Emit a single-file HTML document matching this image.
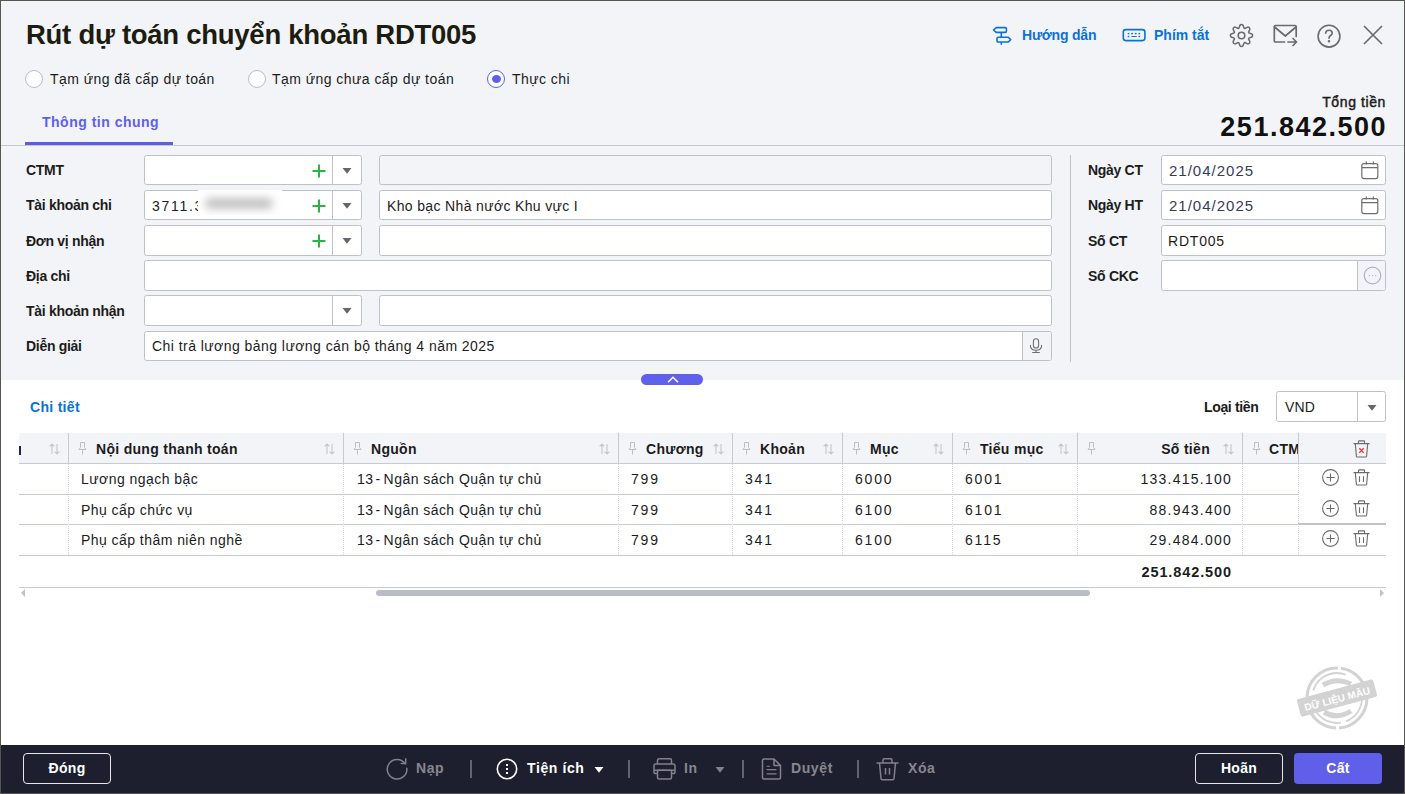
<!DOCTYPE html>
<html><head><meta charset="utf-8"><style>
*{box-sizing:border-box;margin:0;padding:0}
html,body{width:1405px;height:794px;overflow:hidden;background:#fff}
body{font-family:"Liberation Sans",sans-serif;color:#1c1c1c;position:relative}
.a{position:absolute;white-space:nowrap}
svg{position:absolute;overflow:visible}
#frame{position:absolute;left:0;top:0;width:1405px;height:794px;border:1px solid #58554f;z-index:50}
#top{position:absolute;left:0;top:0;width:1405px;height:380px;background:#f3f4f8}
#foot{position:absolute;left:0;top:745px;width:1405px;height:49px;background:#1e1f2e}
.title{left:26px;top:20px;font-size:27.5px;font-weight:700;letter-spacing:-0.27px;color:#1c1c10;line-height:30px}
.radio{width:18px;height:18px;border:1px solid #b9bcc6;border-radius:50%;background:#fff;top:70px}
.rlab{top:71px;font-size:14px;line-height:16px;letter-spacing:0.45px;color:#1c1c1c}
.hl{font-size:14px;font-weight:700;color:#0a72d6;top:27px;line-height:16px}
.lbl{font-size:14px;letter-spacing:-0.3px;font-weight:700;color:#1c1c1c;line-height:16px}
.fld{position:absolute;background:#fff;border:1px solid #bec0ca;border-radius:2.5px;height:30px}
.txt{font-size:14px;line-height:16px;letter-spacing:0.35px;color:#1c1c1c}
.hd{font-size:14px;font-weight:700;line-height:16px;letter-spacing:0.3px;color:#1c1c1c}
.cell{font-size:14px;line-height:16px;letter-spacing:0.45px;color:#1c1c1c}
.num{font-size:14px;line-height:16px;letter-spacing:1.8px;color:#1c1c1c}
.ft{font-size:14px;font-weight:700;line-height:16px;letter-spacing:0.6px;color:#86878f}
</style></head><body>
<div id="top"></div>
<div class="a title">Rút dự toán chuyển khoản RDT005</div>
<div class="a radio" style="left:25px"></div><div class="a rlab" style="left:50px">Tạm ứng đã cấp dự toán</div>
<div class="a radio" style="left:248px"></div><div class="a rlab" style="left:272px">Tạm ứng chưa cấp dự toán</div>
<div class="a radio" style="left:487px;border-color:#5d5fef"></div><div class="a" style="left:491.5px;top:75px;width:9px;height:8px;border-radius:50%;background:#5d5fef"></div><div class="a rlab" style="left:512px">Thực chi</div>
<div class="a" style="left:42px;top:114px;font-size:14px;font-weight:700;letter-spacing:0.5px;color:#5d5fef;line-height:16px">Thông tin chung</div>
<div class="a" style="left:0;top:145px;width:1405px;height:1px;background:#c5c7ce"></div>
<div class="a" style="left:25px;top:142px;width:148px;height:3px;background:#5b5ce8"></div>
<div class="a" style="right:19px;top:94px;font-size:14px;font-weight:400;-webkit-text-stroke:0.45px #1c1c1c;letter-spacing:0.6px;line-height:16px;color:#1c1c1c">Tổng tiền</div>
<div class="a" style="right:18px;top:112px;font-size:27px;font-weight:700;letter-spacing:1.5px;line-height:30px;color:#111">251.842.500</div>
<svg style="left:992px;top:26px" width="21" height="21" viewBox="0 0 21 21" fill="none" stroke="#0a72d6" stroke-width="1.6" stroke-linejoin="round">
<path d="M4.2 1.6H13.3Q14.4 1.6 14.4 2.7V5.3Q14.4 6.4 13.3 6.4H4.2L1.5 4Z"/><path d="M9.3 6.4V11.2M9.3 16V18.8"/>
<path d="M6.1 11.2H16.3L18.7 13.6L16.3 16H6.1Q5 16 5 14.9V12.3Q5 11.2 6.1 11.2Z"/></svg>
<div class="a hl" style="left:1022px;letter-spacing:-0.2px">Hướng dẫn</div>
<svg style="left:1122px;top:28px" width="24" height="14" viewBox="0 0 24 14" fill="none" stroke="#0a72d6" stroke-width="1.6">
<rect x="1.3" y="1.6" width="21.6" height="11" rx="2.5"/>
<g stroke="none" fill="#0a72d6"><rect x="5.7" y="4.9" width="1.6" height="1.4"/><rect x="9.2" y="4.9" width="1.8" height="1.4"/><rect x="12.8" y="4.9" width="1.8" height="1.4"/><rect x="16.5" y="4.9" width="1.6" height="1.4"/>
<rect x="5.7" y="7.8" width="1.6" height="1.4"/><rect x="9.3" y="7.9" width="5.5" height="1.2" rx="0.5"/><rect x="16.5" y="7.8" width="1.6" height="1.4"/></g></svg>
<div class="a hl" style="left:1154px">Phím tắt</div>
<svg style="left:1229.6px;top:23.7px" width="23" height="23" viewBox="0 0 23 23" fill="none" stroke="#6b6b6b" stroke-width="1.5" stroke-linejoin="round">
<path d="M8.90 4.15 L9.95 1.22 A1.9 1.9 0 0 1 13.05 1.22 L14.10 4.15 A7.8 7.8 0 0 1 14.86 4.46 L17.67 3.13 A1.9 1.9 0 0 1 19.87 5.33 L18.54 8.14 A7.8 7.8 0 0 1 18.85 8.90 L21.78 9.95 A1.9 1.9 0 0 1 21.78 13.05 L18.85 14.10 A7.8 7.8 0 0 1 18.54 14.86 L19.87 17.67 A1.9 1.9 0 0 1 17.67 19.87 L14.86 18.54 A7.8 7.8 0 0 1 14.10 18.85 L13.05 21.78 A1.9 1.9 0 0 1 9.95 21.78 L8.90 18.85 A7.8 7.8 0 0 1 8.14 18.54 L5.33 19.87 A1.9 1.9 0 0 1 3.13 17.67 L4.46 14.86 A7.8 7.8 0 0 1 4.15 14.10 L1.22 13.05 A1.9 1.9 0 0 1 1.22 9.95 L4.15 8.90 A7.8 7.8 0 0 1 4.46 8.14 L3.13 5.33 A1.9 1.9 0 0 1 5.33 3.13 L8.14 4.46 A7.8 7.8 0 0 1 8.90 4.15Z"/><circle cx="11.5" cy="11.5" r="3.3" stroke-width="1.6"/></svg>
<svg style="left:1273px;top:24px" width="26" height="24" viewBox="0 0 26 24" fill="none" stroke="#6b6b6b" stroke-width="1.7" stroke-linecap="round" stroke-linejoin="round">
<path d="M11.5 18H2.5Q1.3 18 1.3 16.8V2.7Q1.3 1.5 2.5 1.5H22Q23.2 1.5 23.2 2.7V12.5"/><path d="M1.6 3L12.3 12L23 3"/>
<path d="M15 18H23.5M20 14.5L23.5 18L20 21.5"/></svg>
<svg style="left:1317px;top:24px" width="24" height="24" viewBox="0 0 24 24" fill="none" stroke="#6b6b6b" stroke-width="1.6" stroke-linecap="round">
<circle cx="12" cy="12.2" r="10.9"/><path d="M8.6 9.3Q8.8 6.2 12 6.2Q15.2 6.2 15.2 9.1Q15.2 10.8 13.3 11.8Q12 12.5 12 14.2"/><circle cx="12" cy="17.2" r="0.5" fill="#6b6b6b"/></svg>
<svg style="left:1362px;top:24px" width="22" height="22" viewBox="0 0 22 22" fill="none" stroke="#6b6b6b" stroke-width="1.7">
<path d="M2 2L20 20M20 2L2 20"/></svg>
<div class="a lbl" style="left:26px;top:162px">CTMT</div>
<div class="a lbl" style="left:26px;top:197px">Tài khoản chi</div>
<div class="a lbl" style="left:26px;top:233px">Đơn vị nhận</div>
<div class="a lbl" style="left:26px;top:268px">Địa chỉ</div>
<div class="a lbl" style="left:26px;top:303px">Tài khoản nhận</div>
<div class="a lbl" style="left:26px;top:338px">Diễn giải</div>
<div class="fld" style="left:144px;top:155px;width:218px;height:30px"></div>
<div class="a" style="left:332px;top:155px;width:1px;height:30px;background:#bec0ca"></div>
<svg style="left:342px;top:168px" width="10" height="6" viewBox="0 0 10 6"><path d="M0.5 0H9.5L5 5.8Z" fill="#666"/></svg>
<svg style="left:312px;top:164px" width="14" height="14" viewBox="0 0 14 14" stroke="#2ab441" stroke-width="2"><path d="M7 0.5V13.5M0.5 7H13.5"/></svg>
<div class="fld" style="left:379px;top:155px;width:673px;height:30px;background:#f3f4f8"></div>
<div class="fld" style="left:144px;top:190px;width:218px;height:30px"></div>
<div class="a" style="left:332px;top:190px;width:1px;height:30px;background:#bec0ca"></div>
<svg style="left:342px;top:203px" width="10" height="6" viewBox="0 0 10 6"><path d="M0.5 0H9.5L5 5.8Z" fill="#666"/></svg>
<svg style="left:312px;top:199px" width="14" height="14" viewBox="0 0 14 14" stroke="#2ab441" stroke-width="2"><path d="M7 0.5V13.5M0.5 7H13.5"/></svg>
<div class="fld" style="left:379px;top:190px;width:673px;height:30px;background:#fff"></div>
<div class="fld" style="left:144px;top:225px;width:218px;height:31px"></div>
<div class="a" style="left:332px;top:225px;width:1px;height:31px;background:#bec0ca"></div>
<svg style="left:342px;top:238px" width="10" height="6" viewBox="0 0 10 6"><path d="M0.5 0H9.5L5 5.8Z" fill="#666"/></svg>
<svg style="left:312px;top:234px" width="14" height="14" viewBox="0 0 14 14" stroke="#2ab441" stroke-width="2"><path d="M7 0.5V13.5M0.5 7H13.5"/></svg>
<div class="fld" style="left:379px;top:225px;width:673px;height:31px;background:#fff"></div>
<div class="fld" style="left:144px;top:260px;width:908px;height:31px"></div>
<div class="fld" style="left:144px;top:295px;width:218px;height:31px"></div>
<div class="a" style="left:332px;top:295px;width:1px;height:31px;background:#bec0ca"></div>
<svg style="left:342px;top:308px" width="10" height="6" viewBox="0 0 10 6"><path d="M0.5 0H9.5L5 5.8Z" fill="#666"/></svg>
<div class="fld" style="left:379px;top:295px;width:673px;height:31px;background:#fff"></div>
<div class="fld" style="left:144px;top:331px;width:908px;height:30px"></div>
<div class="a" style="left:1022px;top:332px;width:29px;height:28px;background:#f3f4f8;border-left:1px solid #bec0ca;border-radius:0 2px 2px 0"></div>
<svg style="left:1029px;top:338px" width="14" height="16" viewBox="0 0 14 16" fill="none" stroke="#707070" stroke-width="1.1" stroke-linecap="round">
<rect x="4.4" y="0.8" width="5.2" height="9.2" rx="2.6"/><path d="M1.4 7.2Q1.4 12.2 7 12.2Q12.6 12.2 12.6 7.2M7 12.2V14.4M3.6 14.5H10.4"/></svg>
<div class="a txt" style="left:152px;top:198px;letter-spacing:1.7px">3711.3</div>
<div class="a" style="left:198px;top:190px;width:84px;height:25px;background:#fff;overflow:hidden"><div style="position:absolute;left:7px;top:8px;width:68px;height:11px;border-radius:5px;background:#c2c2c2;filter:blur(4px)"></div></div>
<div class="a txt" style="left:387px;top:198px">Kho bạc Nhà nước Khu vực I</div>
<div class="a txt" style="left:152px;top:338px;letter-spacing:0.45px">Chi trả lương bảng lương cán bộ tháng 4 năm 2025</div>
<div class="a" style="left:1070px;top:155px;width:1px;height:207px;background:#bec0ca"></div>
<div class="a lbl" style="left:1088px;top:162px">Ngày CT</div>
<div class="fld" style="left:1161px;top:155px;width:225px;height:30px"></div>
<div class="a lbl" style="left:1088px;top:197px">Ngày HT</div>
<div class="fld" style="left:1161px;top:190px;width:225px;height:30px"></div>
<div class="a lbl" style="left:1088px;top:233px">Số CT</div>
<div class="fld" style="left:1161px;top:225px;width:225px;height:31px"></div>
<div class="a lbl" style="left:1088px;top:268px">Số CKC</div>
<div class="fld" style="left:1161px;top:260px;width:225px;height:31px"></div>
<div class="a txt" style="left:1169px;top:163px;font-size:15px;letter-spacing:1.0px;color:#363d5a">21/04/2025</div>
<svg style="left:1360px;top:161px" width="19" height="19" viewBox="0 0 19 19" fill="none" stroke="#6e6e6e" stroke-width="1.2">
<rect x="1.8" y="2.6" width="16" height="15" rx="2"/><path d="M1.8 6.7H17.8M6.3 0.5V3.5M13.3 0.5V3.5"/></svg>
<div class="a txt" style="left:1169px;top:198px;font-size:15px;letter-spacing:1.0px;color:#363d5a">21/04/2025</div>
<svg style="left:1360px;top:196px" width="19" height="19" viewBox="0 0 19 19" fill="none" stroke="#6e6e6e" stroke-width="1.2">
<rect x="1.8" y="2.6" width="16" height="15" rx="2"/><path d="M1.8 6.7H17.8M6.3 0.5V3.5M13.3 0.5V3.5"/></svg>
<div class="a txt" style="left:1168px;top:233px;letter-spacing:0.8px">RDT005</div>
<div class="a" style="left:1357px;top:261px;width:28px;height:29px;background:#f3f4f8;border-left:1px solid #bec0ca;border-radius:0 2px 2px 0"></div>
<svg style="left:1362.5px;top:266px" width="19" height="19" viewBox="0 0 19 19" fill="none" stroke="#aeb2c8" stroke-width="1.2">
<circle cx="9.5" cy="9.5" r="8.3"/><g fill="#aeb2c8" stroke="none"><circle cx="6.3" cy="9.6" r="0.7"/><circle cx="9.5" cy="9.6" r="0.7"/><circle cx="12.7" cy="9.6" r="0.7"/></g></svg>
<div class="a" style="left:641px;top:374px;width:62px;height:11px;border-radius:6px;background:#5f60ec"></div>
<svg style="left:667px;top:376px" width="12" height="7" viewBox="0 0 12 7" fill="none" stroke="#fff" stroke-width="1.5"><path d="M1 6.3L6 1.2L11 6.3"/></svg>
<div class="a" style="left:30px;top:399px;font-size:14px;font-weight:700;line-height:16px;letter-spacing:0.3px;color:#0a72d6">Chi tiết</div>
<div class="a lbl" style="left:1204px;top:399px;letter-spacing:-0.35px">Loại tiền</div>
<div class="fld" style="left:1276px;top:391px;width:110px;height:31px"></div>
<div class="a" style="left:1357px;top:391px;width:1px;height:31px;background:#bec0ca"></div>
<svg style="left:1367px;top:405px" width="10" height="6" viewBox="0 0 10 6"><path d="M0.5 0H9.5L5 5.8Z" fill="#666"/></svg>
<div class="a txt" style="left:1285px;top:399px;letter-spacing:0.2px">VND</div>
<div class="a" style="left:19px;top:433px;width:1367px;height:30px;background:#f3f4f8"></div>
<div class="a" style="left:19px;top:463px;width:1279px;height:1px;background:#c8cad3"></div>
<div class="a" style="left:19px;top:494px;width:1279px;height:1px;background:#c8cad3"></div>
<div class="a" style="left:19px;top:524px;width:1279px;height:1px;background:#c8cad3"></div>
<div class="a" style="left:19px;top:555px;width:1279px;height:1px;background:#c8cad3"></div>
<div class="a" style="left:1298px;top:463px;width:88px;height:1px;background:#c8cad3"></div>
<div class="a" style="left:1298px;top:523px;width:88px;height:2px;background:#c0c3cc"></div>
<div class="a" style="left:1298px;top:555px;width:88px;height:1px;background:#c8cad3"></div>
<div class="a" style="left:19px;top:587px;width:1367px;height:1px;background:#c8cad3"></div>
<div class="a" style="left:68px;top:433px;width:1px;height:30px;background:#c8cad3"></div>
<div class="a" style="left:343px;top:433px;width:1px;height:30px;background:#c8cad3"></div>
<div class="a" style="left:618px;top:433px;width:1px;height:30px;background:#c8cad3"></div>
<div class="a" style="left:732px;top:433px;width:1px;height:30px;background:#c8cad3"></div>
<div class="a" style="left:842px;top:433px;width:1px;height:30px;background:#c8cad3"></div>
<div class="a" style="left:952px;top:433px;width:1px;height:30px;background:#c8cad3"></div>
<div class="a" style="left:1077px;top:433px;width:1px;height:30px;background:#c8cad3"></div>
<div class="a" style="left:1242px;top:433px;width:1px;height:30px;background:#c8cad3"></div>
<div class="a" style="left:1298px;top:433px;width:1px;height:30px;background:#c8cad3"></div>
<div class="a" style="left:68px;top:464px;width:1px;height:91px;background:repeating-linear-gradient(to bottom,#d3d5dc 0 1px,transparent 1px 2px)"></div>
<div class="a" style="left:343px;top:464px;width:1px;height:91px;background:repeating-linear-gradient(to bottom,#d3d5dc 0 1px,transparent 1px 2px)"></div>
<div class="a" style="left:618px;top:464px;width:1px;height:91px;background:repeating-linear-gradient(to bottom,#d3d5dc 0 1px,transparent 1px 2px)"></div>
<div class="a" style="left:732px;top:464px;width:1px;height:91px;background:repeating-linear-gradient(to bottom,#d3d5dc 0 1px,transparent 1px 2px)"></div>
<div class="a" style="left:842px;top:464px;width:1px;height:91px;background:repeating-linear-gradient(to bottom,#d3d5dc 0 1px,transparent 1px 2px)"></div>
<div class="a" style="left:952px;top:464px;width:1px;height:91px;background:repeating-linear-gradient(to bottom,#d3d5dc 0 1px,transparent 1px 2px)"></div>
<div class="a" style="left:1077px;top:464px;width:1px;height:91px;background:repeating-linear-gradient(to bottom,#d3d5dc 0 1px,transparent 1px 2px)"></div>
<div class="a" style="left:1242px;top:464px;width:1px;height:91px;background:repeating-linear-gradient(to bottom,#d3d5dc 0 1px,transparent 1px 2px)"></div>
<div class="a" style="left:1298px;top:464px;width:1px;height:91px;background:repeating-linear-gradient(to bottom,#d3d5dc 0 1px,transparent 1px 2px)"></div>
<svg style="left:49px;top:443px" width="11" height="12" viewBox="0 0 11 12" fill="none" stroke="#c3c6cd" stroke-width="1.1"><path d="M3 11V1M0.6 3.4L3 1L5.4 3.4M8 1V11M5.6 8.6L8 11L10.4 8.6"/></svg>
<div class="a" style="left:19px;top:446px;width:1.5px;height:9px;background:#1d2266"></div>
<svg style="left:78px;top:442px" width="9" height="13" viewBox="0 0 9 13" fill="none" stroke="#bdbfc4" stroke-width="1"><path d="M2.5 0.5H6.5V5.5L8 7.5H1L2.5 5.5Z"/><path d="M4.5 7.5V12.5"/></svg>
<div class="a hd" style="left:96px;top:441px">Nội dung thanh toán</div>
<svg style="left:324px;top:443px" width="11" height="12" viewBox="0 0 11 12" fill="none" stroke="#c3c6cd" stroke-width="1.1"><path d="M3 11V1M0.6 3.4L3 1L5.4 3.4M8 1V11M5.6 8.6L8 11L10.4 8.6"/></svg>
<svg style="left:353px;top:442px" width="9" height="13" viewBox="0 0 9 13" fill="none" stroke="#bdbfc4" stroke-width="1"><path d="M2.5 0.5H6.5V5.5L8 7.5H1L2.5 5.5Z"/><path d="M4.5 7.5V12.5"/></svg>
<div class="a hd" style="left:371px;top:441px">Nguồn</div>
<svg style="left:599px;top:443px" width="11" height="12" viewBox="0 0 11 12" fill="none" stroke="#c3c6cd" stroke-width="1.1"><path d="M3 11V1M0.6 3.4L3 1L5.4 3.4M8 1V11M5.6 8.6L8 11L10.4 8.6"/></svg>
<svg style="left:628px;top:442px" width="9" height="13" viewBox="0 0 9 13" fill="none" stroke="#bdbfc4" stroke-width="1"><path d="M2.5 0.5H6.5V5.5L8 7.5H1L2.5 5.5Z"/><path d="M4.5 7.5V12.5"/></svg>
<div class="a hd" style="left:646px;top:441px">Chương</div>
<svg style="left:713px;top:443px" width="11" height="12" viewBox="0 0 11 12" fill="none" stroke="#c3c6cd" stroke-width="1.1"><path d="M3 11V1M0.6 3.4L3 1L5.4 3.4M8 1V11M5.6 8.6L8 11L10.4 8.6"/></svg>
<svg style="left:742px;top:442px" width="9" height="13" viewBox="0 0 9 13" fill="none" stroke="#bdbfc4" stroke-width="1"><path d="M2.5 0.5H6.5V5.5L8 7.5H1L2.5 5.5Z"/><path d="M4.5 7.5V12.5"/></svg>
<div class="a hd" style="left:760px;top:441px">Khoản</div>
<svg style="left:823px;top:443px" width="11" height="12" viewBox="0 0 11 12" fill="none" stroke="#c3c6cd" stroke-width="1.1"><path d="M3 11V1M0.6 3.4L3 1L5.4 3.4M8 1V11M5.6 8.6L8 11L10.4 8.6"/></svg>
<svg style="left:852px;top:442px" width="9" height="13" viewBox="0 0 9 13" fill="none" stroke="#bdbfc4" stroke-width="1"><path d="M2.5 0.5H6.5V5.5L8 7.5H1L2.5 5.5Z"/><path d="M4.5 7.5V12.5"/></svg>
<div class="a hd" style="left:870px;top:441px">Mục</div>
<svg style="left:933px;top:443px" width="11" height="12" viewBox="0 0 11 12" fill="none" stroke="#c3c6cd" stroke-width="1.1"><path d="M3 11V1M0.6 3.4L3 1L5.4 3.4M8 1V11M5.6 8.6L8 11L10.4 8.6"/></svg>
<svg style="left:962px;top:442px" width="9" height="13" viewBox="0 0 9 13" fill="none" stroke="#bdbfc4" stroke-width="1"><path d="M2.5 0.5H6.5V5.5L8 7.5H1L2.5 5.5Z"/><path d="M4.5 7.5V12.5"/></svg>
<div class="a hd" style="left:980px;top:441px">Tiểu mục</div>
<svg style="left:1058px;top:443px" width="11" height="12" viewBox="0 0 11 12" fill="none" stroke="#c3c6cd" stroke-width="1.1"><path d="M3 11V1M0.6 3.4L3 1L5.4 3.4M8 1V11M5.6 8.6L8 11L10.4 8.6"/></svg>
<svg style="left:1087px;top:442px" width="9" height="13" viewBox="0 0 9 13" fill="none" stroke="#bdbfc4" stroke-width="1"><path d="M2.5 0.5H6.5V5.5L8 7.5H1L2.5 5.5Z"/><path d="M4.5 7.5V12.5"/></svg>
<div class="a hd" style="right:195px;top:441px">Số tiền</div>
<svg style="left:1223px;top:443px" width="11" height="12" viewBox="0 0 11 12" fill="none" stroke="#c3c6cd" stroke-width="1.1"><path d="M3 11V1M0.6 3.4L3 1L5.4 3.4M8 1V11M5.6 8.6L8 11L10.4 8.6"/></svg>
<svg style="left:1252px;top:442px" width="9" height="13" viewBox="0 0 9 13" fill="none" stroke="#bdbfc4" stroke-width="1"><path d="M2.5 0.5H6.5V5.5L8 7.5H1L2.5 5.5Z"/><path d="M4.5 7.5V12.5"/></svg>
<div class="a" style="left:1243px;top:433px;width:55px;height:30px;overflow:hidden"><div class="a hd" style="left:26px;top:8px">CTMT</div></div>
<svg style="left:1353px;top:440px" width="17" height="18" viewBox="0 0 17 18" fill="none" stroke="#6b6b6b" stroke-width="1.1">
<path d="M0.5 3.6H16.5M5.5 3.6V1.5Q5.5 0.9 6.1 0.9H10.9Q11.5 0.9 11.5 1.5V3.6M2.3 3.6L3.4 16.4Q3.5 17 4.1 17H12.9Q13.5 17 13.6 16.4L14.7 3.6"/>
<path d="M6.3 8.3L10.7 12.9M10.7 8.3L6.3 12.9" stroke="#e53935" stroke-width="1.3"/></svg>
<div class="a cell" style="left:81px;top:471px">Lương ngạch bậc</div>
<div class="a cell" style="left:357px;top:471px">13<span style="margin:0 3px 0 2px">-</span>Ngân sách Quận tự chủ</div>
<div class="a num" style="left:631px;top:471px">799</div>
<div class="a num" style="left:745px;top:471px">341</div>
<div class="a num" style="left:855px;top:471px">6000</div>
<div class="a num" style="left:965px;top:471px">6001</div>
<div class="a num" style="right:173px;top:471px;letter-spacing:1.25px">133.415.100</div>
<svg style="left:1321.5px;top:468.5px" width="17" height="17" viewBox="0 0 17 17" fill="none" stroke="#6b6b6b" stroke-width="1.1"><circle cx="8.5" cy="8.5" r="7.9"/><path d="M8.5 4.5V12.5M4.5 8.5H12.5"/></svg>
<svg style="left:1353px;top:468.5px" width="17" height="17" viewBox="0 0 17 17" fill="none" stroke="#6b6b6b" stroke-width="1.1">
<path d="M0.5 3.6H16.5M5.5 3.6V1.5Q5.5 0.9 6.1 0.9H10.9Q11.5 0.9 11.5 1.5V3.6M2.3 3.6L3.4 15.4Q3.5 16 4.1 16H12.9Q13.5 16 13.6 15.4L14.7 3.6M6.5 7.3V13M10.5 7.3V13"/></svg>
<div class="a cell" style="left:81px;top:502px">Phụ cấp chức vụ</div>
<div class="a cell" style="left:357px;top:502px">13<span style="margin:0 3px 0 2px">-</span>Ngân sách Quận tự chủ</div>
<div class="a num" style="left:631px;top:502px">799</div>
<div class="a num" style="left:745px;top:502px">341</div>
<div class="a num" style="left:855px;top:502px">6100</div>
<div class="a num" style="left:965px;top:502px">6101</div>
<div class="a num" style="right:173px;top:502px;letter-spacing:1.25px">88.943.400</div>
<svg style="left:1321.5px;top:499.5px" width="17" height="17" viewBox="0 0 17 17" fill="none" stroke="#6b6b6b" stroke-width="1.1"><circle cx="8.5" cy="8.5" r="7.9"/><path d="M8.5 4.5V12.5M4.5 8.5H12.5"/></svg>
<svg style="left:1353px;top:499.5px" width="17" height="17" viewBox="0 0 17 17" fill="none" stroke="#6b6b6b" stroke-width="1.1">
<path d="M0.5 3.6H16.5M5.5 3.6V1.5Q5.5 0.9 6.1 0.9H10.9Q11.5 0.9 11.5 1.5V3.6M2.3 3.6L3.4 15.4Q3.5 16 4.1 16H12.9Q13.5 16 13.6 15.4L14.7 3.6M6.5 7.3V13M10.5 7.3V13"/></svg>
<div class="a cell" style="left:81px;top:532px">Phụ cấp thâm niên nghề</div>
<div class="a cell" style="left:357px;top:532px">13<span style="margin:0 3px 0 2px">-</span>Ngân sách Quận tự chủ</div>
<div class="a num" style="left:631px;top:532px">799</div>
<div class="a num" style="left:745px;top:532px">341</div>
<div class="a num" style="left:855px;top:532px">6100</div>
<div class="a num" style="left:965px;top:532px">6115</div>
<div class="a num" style="right:173px;top:532px;letter-spacing:1.25px">29.484.000</div>
<svg style="left:1321.5px;top:529.5px" width="17" height="17" viewBox="0 0 17 17" fill="none" stroke="#6b6b6b" stroke-width="1.1"><circle cx="8.5" cy="8.5" r="7.9"/><path d="M8.5 4.5V12.5M4.5 8.5H12.5"/></svg>
<svg style="left:1353px;top:529.5px" width="17" height="17" viewBox="0 0 17 17" fill="none" stroke="#6b6b6b" stroke-width="1.1">
<path d="M0.5 3.6H16.5M5.5 3.6V1.5Q5.5 0.9 6.1 0.9H10.9Q11.5 0.9 11.5 1.5V3.6M2.3 3.6L3.4 15.4Q3.5 16 4.1 16H12.9Q13.5 16 13.6 15.4L14.7 3.6M6.5 7.3V13M10.5 7.3V13"/></svg>
<div class="a num" style="right:173px;top:564px;font-weight:700;font-size:14.5px;letter-spacing:0.9px">251.842.500</div>
<svg style="left:21px;top:589px" width="4" height="8" viewBox="0 0 4 8"><path d="M4 0V8L0 4Z" fill="#c0c3cb"/></svg>
<svg style="left:1380px;top:589px" width="4" height="8" viewBox="0 0 4 8"><path d="M0 0V8L4 4Z" fill="#c0c3cb"/></svg>
<div class="a" style="left:376px;top:590px;width:714px;height:6px;border-radius:3px;background:#b9bdc5"></div>
<svg style="left:1296px;top:662px" width="84" height="74" viewBox="0 0 84 74">
<g fill="none" stroke="#d3d3d3">
<circle cx="41" cy="36" r="30" stroke-width="3" stroke-dasharray="45 3 35 4 55 3 50"/>
<circle cx="41" cy="36" r="25" stroke-width="1.8" stroke-dasharray="30 5 45 6 40"/>
<path d="M27 23Q41 15 55 22" stroke-width="5"/><path d="M28 50Q41 58 55 49" stroke-width="5"/>
</g>
<g transform="rotate(-15 41 36)"><rect x="1.5" y="27" width="79" height="18" rx="2" fill="#d3d3d3"/>
<text x="41" y="40.5" text-anchor="middle" font-family="Liberation Sans" font-weight="700" font-size="10" fill="#fff" letter-spacing="0.1">DỮ LIỆU MẪU</text></g>
</svg>
<div id="foot"></div>
<div class="a" style="left:23px;top:753px;width:88px;height:31px;border:1px solid #e6e6ea;border-radius:4px"></div>
<div class="a" style="left:23px;top:753px;width:88px;height:31px;padding-top:1px;line-height:29px;text-align:center;font-size:14px;font-weight:700;letter-spacing:0.3px;color:#fff">Đóng</div>
<div class="a" style="left:1195px;top:753px;width:88px;height:31px;border:1px solid #e6e6ea;border-radius:4px"></div>
<div class="a" style="left:1195px;top:753px;width:88px;height:31px;padding-top:1px;line-height:29px;text-align:center;font-size:14px;font-weight:700;letter-spacing:0.3px;color:#fff">Hoãn</div>
<div class="a" style="left:1294px;top:753px;width:88px;height:31px;border-radius:4px;background:#5f5fea"></div>
<div class="a" style="left:1294px;top:753px;width:88px;height:31px;padding-top:1px;line-height:29px;text-align:center;font-size:14px;font-weight:700;letter-spacing:0.3px;color:#fff">Cất</div>
<svg style="left:386px;top:758px" width="22" height="22" viewBox="0 0 22 22" fill="none" stroke="#80818b" stroke-width="1.5" stroke-linecap="round">
<path d="M20.8 10.2A9.8 9.8 0 1 1 19.2 5.8"/><path d="M19.7 0.8V5.5H15.3"/></svg>
<div class="a ft" style="left:416px;top:760px">Nạp</div>
<div class="a" style="left:470px;top:760px;width:2px;height:18px;background:#62636d"></div>
<div class="a" style="left:628px;top:760px;width:2px;height:18px;background:#62636d"></div>
<div class="a" style="left:742px;top:760px;width:2px;height:18px;background:#62636d"></div>
<div class="a" style="left:857px;top:760px;width:2px;height:18px;background:#62636d"></div>
<svg style="left:496px;top:758px" width="22" height="22" viewBox="0 0 22 22" fill="none" stroke="#fff" stroke-width="1.6">
<circle cx="11" cy="11" r="9.7"/><g fill="#fff" stroke="none"><rect x="10" y="6" width="2" height="2"/><rect x="10" y="10" width="2" height="2"/><rect x="10" y="14" width="2" height="2"/></g></svg>
<div class="a ft" style="left:527px;top:760px;color:#fff">Tiện ích</div>
<svg style="left:594px;top:767px" width="10" height="6" viewBox="0 0 10 6"><path d="M0.5 0H9.5L5 5.8Z" fill="#fff"/></svg>
<svg style="left:653px;top:758px" width="23" height="22" viewBox="0 0 23 22" fill="none" stroke="#80818b" stroke-width="1.5" stroke-linejoin="round">
<path d="M4.5 6V2.3Q4.5 0.8 6 0.8H17Q18.5 0.8 18.5 2.3V6"/><path d="M4.5 15.5H2.8Q1 15.5 1 13.7V7.8Q1 6 2.8 6H20.2Q22 6 22 7.8V13.7Q22 15.5 20.2 15.5H18.5"/><path d="M1 12.3H22"/><path d="M4.5 12.3H18.5V19.5Q18.5 21 17 21H6Q4.5 21 4.5 19.5Z"/></svg>
<div class="a ft" style="left:684px;top:760px">In</div>
<svg style="left:715px;top:767px" width="10" height="6" viewBox="0 0 10 6"><path d="M0.5 0H9.5L5 5.8Z" fill="#80818b"/></svg>
<svg style="left:761px;top:758px" width="21" height="22" viewBox="0 0 21 22" fill="none" stroke="#80818b" stroke-width="1.5" stroke-linejoin="round">
<path d="M2.5 1H13L19.5 7.5V19.5Q19.5 21 18 21H3Q1.5 21 1.5 19.5V2.5Q1.5 1 3 1Z"/><path d="M13 1V7.5H19.5"/><path d="M5.6 8.2H9M5.6 11.6H15.5M5.6 15.9H15.5" stroke-width="1.1"/></svg>
<div class="a ft" style="left:791px;top:760px">Duyệt</div>
<svg style="left:876px;top:758px" width="23" height="23" viewBox="0 0 23 23" fill="none" stroke="#80818b" stroke-width="1.5" stroke-linejoin="round">
<path d="M0.5 5H22.5M7 5V2Q7 0.8 8.2 0.8H14.8Q16 0.8 16 2V5M3.5 5L5 20.5Q5.1 21.7 6.3 21.7H16.7Q17.9 21.7 18 20.5L19.5 5M9.5 10V16.5M13.5 10V16.5"/></svg>
<div class="a ft" style="left:908px;top:760px">Xóa</div>
<div id="frame"></div>
</body></html>
